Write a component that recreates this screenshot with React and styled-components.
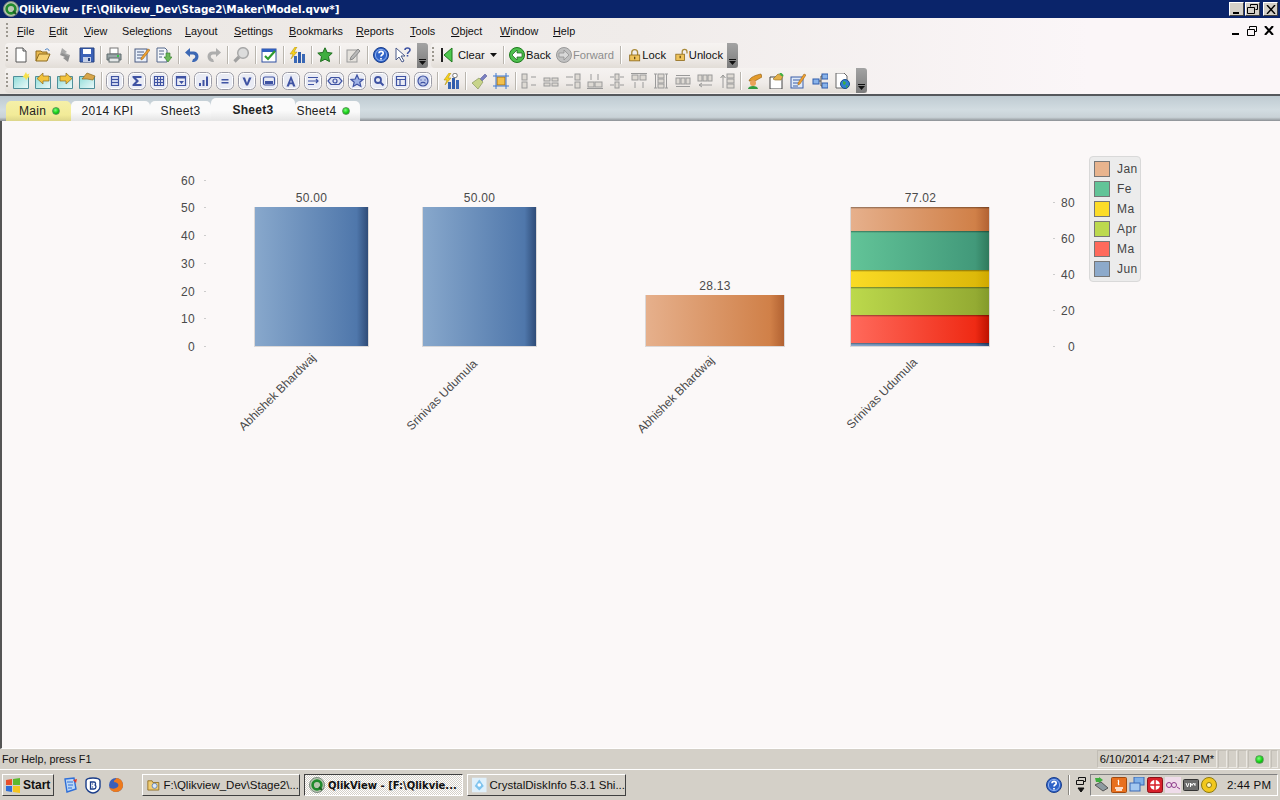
import React from 'react';
import styled, { createGlobalStyle } from 'styled-components';

const GlobalStyle = createGlobalStyle`
  html, body { margin: 0; padding: 0; background: #d4d0c8; }
  * { box-sizing: border-box; }
`;

const uiFont = `"Liberation Sans", Arial, sans-serif`;
const wideFont = `"DejaVu Sans", Verdana, sans-serif`;

const Screen = styled.div`
  width: 1280px;
  height: 800px;
  overflow: hidden;
  display: flex;
  flex-direction: column;
  font-family: ${uiFont};
  font-size: 11px;
  color: #111;
`;

const TitleBar = styled.div`
  height: 18px;
  background: #0a246a;
  display: flex;
  align-items: center;
  padding: 0 2px 0 3px;
  flex: none;
`;

const TitleText = styled.span`
  color: #fff;
  font-family: ${wideFont};
  font-weight: 700;
  font-size: 10.37px;
  flex: 1;
  white-space: nowrap;
`;

const CapButton = styled.div`
  width: 15px;
  height: 14px;
  background: #d4d0c8;
  border: 1px solid;
  border-color: #fff #404040 #404040 #fff;
  margin-left: ${p => p.$gap || 1}px;
  display: flex;
  align-items: center;
  justify-content: center;
`;

const Chrome = styled.div`
  flex: none;
  height: 78px;
  background: linear-gradient(90deg, #ebe7e3 0%, #f0ecea 50%, #fbf6f8 85%, #fbf6f8 100%);
  border-bottom: 2px solid #55585c;
  display: flex;
  flex-direction: column;
`;

const MenuRow = styled.div`
  height: 25px;
  display: flex;
  align-items: center;
  padding: 1px 5px 0 5px;
`;

const Menus = styled.div`
  display: flex;
  flex: 1;
  margin-left: 7px;
`;

const MenuItem = styled.span`
  width: ${p => p.$w}px;
  font-size: 10.8px;
  white-space: nowrap;
  u { text-underline-offset: 1px; }
`;

const MdiButtons = styled.div`
  display: flex;
  gap: 7px;
  padding-right: 1px;
  align-items: center;
`;

const ToolRow = styled.div`
  height: 26px;
  display: flex;
  padding-left: 5px;
  gap: 3px;
`;

const Toolbar = styled.div`
  height: 25px;
  display: flex;
  align-items: center;
  background: linear-gradient(180deg, #f6f3f1 0%, #efebe8 60%, #e2ddd7 100%);
  border-radius: 4px 0 0 4px;
`;

const Grip = styled.div`
  height: 16px;
  background: repeating-linear-gradient(180deg, #9c9890 0 2px, transparent 2px 4px);
  width: 2px;
  margin: 0 2px 0 1px;
`;

const Sep = styled.div`
  width: 1px;
  height: 18px;
  background: #b9b5ae;
  margin: 0 ${p => p.$m ?? 2.5}px;
  box-shadow: 1px 0 0 #fff;
  flex: none;
`;

const IconBtn = styled.div`
  width: 22px;
  height: 22px;
  display: flex;
  align-items: center;
  justify-content: center;
  flex: none;
`;

const TextBtn = styled.div`
  display: flex;
  align-items: center;
  gap: 1px;
  width: ${p => p.$w}px;
  flex: none;
  font-size: 11.2px;
  color: ${p => (p.$off ? '#8d8d8d' : '#111')};
  margin-left: ${p => p.$ml || 0}px;
  white-space: nowrap;
`;

const Chevron = styled.div`
  width: 11px;
  height: 25px;
  background: linear-gradient(180deg, #a3a3a3, #7c7c7c);
  border-radius: 0 3px 3px 0;
  margin-left: ${p => p.$ml || 0}px;
  display: flex;
  align-items: flex-end;
  justify-content: center;
  padding-bottom: 3px;
`;

const TabBand = styled.div`
  flex: none;
  height: 25px;
  background: linear-gradient(180deg, #bfcbd2 0%, #d2dce1 55%, #c9d2d7 85%, #8b9094 100%);
  display: flex;
  align-items: flex-end;
  padding-left: 6px;
`;

const Tab = styled.div`
  width: ${p => p.$w}px;
  height: ${p => (p.$active ? 23 : 20)}px;
  border-radius: 5px 5px 0 0;
  display: flex;
  align-items: center;
  justify-content: center;
  gap: 6px;
  font-size: 12px;
  letter-spacing: 0.3px;
  font-weight: ${p => (p.$active ? 700 : 400)};
  background: ${p => p.$bg || 'linear-gradient(180deg, #fafafa 0%, #fafafa 55%, #e4e4e4 100%)'};
  padding: 0 ${p => p.$pr || 0}px 0 ${p => p.$pl || 0}px;
  color: #222;
`;

const Dot = styled.span`
  width: ${p => p.$s || 8}px;
  height: ${p => p.$s || 8}px;
  border-radius: 50%;
  background: radial-gradient(circle at 40% 35%, #7dff7d 0%, #12d012 55%, #0a8a0a 100%);
  border: 1px solid #5a9a5a;
  flex: none;
`;

const Sheet = styled.div`
  flex: 1;
  min-height: 0;
  background: #fbf8f8;
  border-left: 2px solid #555;
  border-bottom: 1px solid #fff;
  padding: 30px 0 0 168px;
  display: flex;
  align-items: flex-start;
`;

const ChartSvg = styled.svg`
  display: block;
  flex: none;
  margin-left: ${p => p.$ml || 0}px;
  text {
    font-family: ${uiFont};
    font-size: 12px;
    fill: #4a4a4a;
    letter-spacing: 0.3px;
  }
  text.slant {
    letter-spacing: 0;
  }
`;

const Legend = styled.div`
  width: 52px;
  height: 126px;
  margin: 5px 0 0 9px;
  flex: none;
  background: #ececec;
  border: 1px solid #d9d9d9;
  border-radius: 4px;
  padding: 4px 0 0 4px;
  display: flex;
  flex-direction: column;
  gap: 4px;
`;

const LegendRow = styled.div`
  display: flex;
  align-items: center;
  gap: 7px;
  height: 16px;
  font-size: 12px;
  letter-spacing: 0.4px;
  color: #444;
`;

const Swatch = styled.span`
  width: 16px;
  height: 16px;
  flex: none;
  background: ${p => p.$c};
  border: 1px solid #777;
`;

const StatusBar = styled.div`
  flex: none;
  height: 21px;
  background: #d4d0c8;
  display: flex;
  align-items: center;
  border-bottom: 1px solid #fff;
  padding: 0 2px;
`;

const StatusText = styled.span`
  flex: 1;
  font-size: 10.8px;
`;

const StatusCell = styled.div`
  width: ${p => p.$w}px;
  height: 18px;
  border: 1px solid;
  border-color: #c2beb6 #ece9e4 #ece9e4 #c2beb6;
  margin-left: 1px;
  display: flex;
  align-items: center;
  justify-content: center;
  font-size: 11.2px;
  white-space: nowrap;
`;

const Taskbar = styled.div`
  flex: none;
  height: 30px;
  background: #d4d0c8;
  display: flex;
  align-items: center;
  padding: 0 2px;
`;

const StartButton = styled.div`
  width: 52px;
  height: 22px;
  border: 1px solid;
  border-color: #fff #404040 #404040 #fff;
  display: flex;
  align-items: center;
  gap: 2px;
  padding-left: 2px;
  font-weight: 700;
  font-size: 12px;
`;

const QuickLaunch = styled.div`
  display: flex;
  width: 88px;
  padding-left: 5px;
  gap: 1px;
`;

const TaskButton = styled.div`
  width: ${p => p.$w}px;
  height: 22px;
  margin-right: 4px;
  display: flex;
  align-items: center;
  gap: 3px;
  padding-left: 4px;
  white-space: nowrap;
  overflow: hidden;
  border: 1px solid;
  border-color: ${p => (p.$active ? '#404040 #fff #fff #404040' : '#fff #404040 #404040 #fff')};
  font-weight: ${p => (p.$active ? 700 : 400)};
  font-family: ${p => (p.$active ? wideFont : uiFont)};
  font-size: ${p => (p.$active ? '10px' : '11.5px')};
  background: ${p => (p.$active
    ? 'repeating-conic-gradient(#fff 0 25%, #d4d0c8 0 50%) 0 0 / 2px 2px'
    : '#d4d0c8')};
`;

const TaskSpacer = styled.div`
  flex: 1;
`;

const TrayExtras = styled.div`
  display: flex;
  align-items: center;
  gap: 6px;
  margin-right: 3px;
`;

const TrayDivider = styled.div`
  width: 1px;
  height: 20px;
  background: #8a8780;
  box-shadow: 1px 0 0 #fff;
`;

const Tray = styled.div`
  width: 188px;
  height: 22px;
  border: 1px solid;
  border-color: #808080 #fff #fff #808080;
  display: flex;
  align-items: center;
  padding-left: 2px;
  gap: 2px;
`;

const Clock = styled.span`
  margin-left: 8px;
  font-size: 11.5px;
  letter-spacing: 0.2px;
`;

const Svg = ({ s = 16, children }) => (
  <svg width={s} height={s} viewBox="0 0 16 16">{children}</svg>
);

const Q = () => (
  <Svg>
    <circle cx="8" cy="8" r="7.5" fill="#b8c6b0" stroke="#7b8b7f" />
    <circle cx="8" cy="8" r="4.4" fill="none" stroke="#1f8a2c" strokeWidth="2.6" />
    <path d="M10 10l3 3" stroke="#1d5e24" strokeWidth="2" />
  </Svg>
);

const Round = ({ children }) => (
  <svg width="18" height="18" viewBox="0 0 18 18">
    <rect x=".5" y=".5" width="17" height="17" rx="5" fill="#fff" stroke="#9b9ba6" />
    <rect x="2" y="2" width="14" height="14" rx="3.500" fill="#e9ebf4" />
    <g fill="#3f53a3" stroke="#3f53a3" strokeWidth="1.200">{children}</g>
  </svg>
);

const Ghost = ({ children }) => (
  <Svg>
    <g fill="#dedad4" stroke="#9a9a9a" strokeWidth="1">{children}</g>
  </Svg>
);

const Bolt = () => <path d="M6 0L1 7h3L2 12l6-7H5l3-5z" fill="#f7d21b" stroke="#a98a10" strokeWidth=".5" />;

const Chart = () => (
  <Svg>
    <rect x="5" y="9" width="3" height="7" fill="#3a68b5" />
    <rect x="9" y="5" width="3" height="11" fill="#2f5cab" />
    <rect x="13" y="7" width="3" height="9" fill="#3a68b5" />
    <Bolt />
  </Svg>
);

const Sheetish = ({ id, children }) => (
  <svg width="17" height="17" viewBox="0 0 17 17">
    <defs>
      <linearGradient id={id} x1="0" x2="1" y1="0" y2="1">
        <stop offset="0" stopColor="#8fdcd8" />
        <stop offset="1" stopColor="#eefafa" />
      </linearGradient>
    </defs>
    <path d="M.5 4.500h15v12H.5z" fill={`url(#${id})`} stroke="#4f8f9a" />
    {children}
  </svg>
);

const icons = {
  new: <Svg><path d="M3 1h7l3 3v11H3z" fill="#fff" stroke="#555" /><path d="M10 1v3h3" fill="#ddd" stroke="#555" /></Svg>,
  open: <Svg><path d="M1 14V4h5l1 1h5v2" fill="#e9b94f" stroke="#8d6a1e" /><path d="M1 14l3-7h11l-3 7z" fill="#f6d275" stroke="#8d6a1e" /><path d="M10 3c2-2 4-1 4 1" fill="none" stroke="#3a78c2" /></Svg>,
  swap: <Svg><path d="M5 1l5 4-2 1 5 2-2 2-6-3-2 1z" fill="#a8a8a8" /><path d="M11 15L6 11l2-1-5-2 2-2 6 3 2-1z" fill="#8f8f8f" /></Svg>,
  save: <Svg><path d="M1 1h14v14H1z" fill="#3c62b8" stroke="#24407e" /><rect x="4" y="2" width="8" height="5" fill="#fff" /><rect x="4" y="10" width="8" height="5" fill="#c5cfe6" /><rect x="9" y="11" width="2" height="3" fill="#24407e" /></Svg>,
  print: <Svg><rect x="4" y="1" width="8" height="6" fill="#fff" stroke="#777" /><path d="M1 7h14v6H1z" fill="#9aa6a8" stroke="#5f6a6c" /><rect x="3" y="11" width="10" height="4" fill="#e5e8e8" stroke="#5f6a6c" /><rect x="11" y="8" width="2" height="2" fill="#39c24c" /></Svg>,
  edit: <Svg><rect x="1" y="2" width="12" height="13" fill="#e9f0fb" stroke="#4a5a80" /><path d="M3 5h7M3 8h7M3 11h5" stroke="#4a5a80" /><path d="M7 11l7-9 2 1-7 9-2 1z" fill="#f0a030" stroke="#8d5a10" strokeWidth=".5" /></Svg>,
  reload: <Svg><path d="M1 1h8l2 2v12H1z" fill="#f3f6fb" stroke="#55678a" /><path d="M3 4h5M3 7h5M3 10h3" stroke="#55678a" /><path d="M10 6h4v4h2l-4 5-4-5h2z" fill="#6cb85a" stroke="#2f7a25" strokeWidth=".6" /></Svg>,
  undo: <Svg><path d="M6 1L1 5.500 6 10V7.500h3c3 0 3 4 0 4.500l-1 3h2c6-1 6-10 0-10.500H6z" fill="#3d68b4" /></Svg>,
  redo: <Svg><path d="M10 1l5 4.500L10 10V7.500H7c-3 0-3 4 0 4.500l1 3H6C0 14 0 5 6 4.500h4z" fill="#adadad" /></Svg>,
  search: <Svg><circle cx="10" cy="6" r="5.300" fill="#dcdcdc" stroke="#a8a8a8" strokeWidth="1.500" /><path d="M6 10l-4.500 4.500" stroke="#a0a0a0" strokeWidth="3.200" /></Svg>,
  check: <Svg><rect x="1" y="2" width="14" height="13" fill="#fff" stroke="#2f4fa0" /><rect x="1" y="2" width="14" height="3" fill="#2f5fc0" /><path d="M4 9l3 3 7-8" fill="none" stroke="#2f9b2f" strokeWidth="2.2" /></Svg>,
  chart: <Chart />,
  star: <Svg><path d="M8 .8l2.2 4.7 5 .6-3.7 3.5 1 5L8 12.2l-4.5 2.4 1-5L.8 6.1l5-.6z" fill="#3fae3f" stroke="#1d6d1d" /></Svg>,
  pencil: <Svg><rect x="2" y="3" width="10" height="12" fill="#e4e1dc" stroke="#9a9a9a" /><path d="M6 10l7-8 2 2-7 8-3 1z" fill="#b9b9b9" stroke="#8a8a8a" /></Svg>,
  help: <Svg><circle cx="8" cy="8" r="7.5" fill="#2f63c8" stroke="#1b3e8a" /><circle cx="8" cy="8" r="5.6" fill="none" stroke="#8fb0ee" /><path d="M6 6.2c0-2.4 4.2-2.4 4.2 0 0 1.6-2.2 1.6-2.2 3.4M8 11v1.6" fill="none" stroke="#fff" strokeWidth="1.7" /></Svg>,
  whats: <Svg><path d="M1 1v12l3-3 3 5 2-1-3-5h4z" fill="#fff" stroke="#4a5a8a" /><path d="M10 3c0-2.6 5-2.6 5 0 0 2-2.500 2-2.500 4M12.500 8v1.500" fill="none" stroke="#3f53a3" strokeWidth="1.6" /></Svg>,
  newsheet: <Sheetish id="s1"><path d="M13 0l1 2.500 2.500-1-1 2.500 1.500 1-2.500.8-1.500 2.500-1-2.500-2.500-.8 1.500-1.500z" fill="#f7e14a" /></Sheetish>,
  prev: <Sheetish id="s2"><path d="M2 6.500l6-5.500v3h6v5H8v3z" fill="#f3c33d" stroke="#8d6a1e" strokeWidth=".7" /></Sheetish>,
  next: <Sheetish id="s3"><path d="M15 6.500L9 1v3H3v5h6v3z" fill="#f3c33d" stroke="#8d6a1e" strokeWidth=".7" /></Sheetish>,
  hand: <Sheetish id="s4"><path d="M3 7l5-6 8 3-2 4-6-1z" fill="#d9a64a" stroke="#8d6a1e" strokeWidth=".7" /></Sheetish>,
  rList: <Round><path d="M5.500 4.500h7v9h-7zM5.500 7.500h7M5.500 10.500h7" fill="#cfd6ef" /></Round>,
  rSigma: <Round><path d="M4.500 4h9v2H8l3 3-3 3h5.500v2h-9v-1.500L8 9 4.500 5.500z" stroke="none" /></Round>,
  rGrid: <Round><path d="M4.500 4.500h9v9h-9zM4.500 7.500h9M4.500 10.500h9M7.500 4.500v9M10.500 4.500v9" fill="none" /></Round>,
  rMulti: <Round><path d="M4.500 4.500h9v9h-9z" fill="none" /><path d="M4.500 4.500h9v2h-9zM7 9h5l-2.500 3z" stroke="none" /></Round>,
  rBars: <Round><path d="M5 11h2v3H5zM8.500 8h2v6h-2zM12 4.500h2V14h-2z" stroke="none" /></Round>,
  rEq: <Round><path d="M5.500 7h7v1.500h-7zM5.500 10h7v1.500h-7z" stroke="none" /></Round>,
  rCheck: <Round><path d="M4.500 5.500h2.500L9 11l2-5.500h2.500L10 13.500H8z" stroke="none" /></Round>,
  rBtn: <Round><rect x="3.500" y="5" width="11" height="8" rx="1.500" fill="none" /><rect x="5" y="9" width="8" height="3" stroke="none" /></Round>,
  rA: <Round><path d="M9 3.500L13.500 14.500h-2.400l-.8-2.200H7.700l-.8 2.200H4.500zM8.200 10.500h1.600L9 8z" stroke="none" fillRule="evenodd" /></Round>,
  rLines: <Round><path d="M4 5.500h10M4 9h6M4 12.500h6M10 9h4M12 7l2 2-2 2" fill="none" /></Round>,
  rEye: <Round><path d="M2 9l3-3.500h8l3 3.500-3 3.500H5z" fill="#dfe3f3" /><circle cx="9" cy="9" r="2" fill="none" /></Round>,
  rStar: <Round><path d="M9 3l1.800 4 4.200.4-3.200 2.800 1 4.200L9 12.200l-3.800 2.200 1-4.200L3 7.400 7.200 7z" fill="#9fb2e6" /></Round>,
  rSearch: <Round><circle cx="8" cy="8" r="3" fill="none" strokeWidth="1.800" /><path d="M10 10l3.500 3.500" strokeWidth="2" /></Round>,
  rLayout: <Round><path d="M4.500 4.500h9v9h-9zM4.500 7.500h9M8 7.500v6" fill="none" /></Round>,
  rSmile: <Round><circle cx="9" cy="9" r="5" fill="#bcc7ea" /><path d="M6.500 11.500c1-1.500 4-1.500 5 0M7 7.500v1M11 7.500v1" fill="none" /></Round>,
  info: <Svg><rect x="5" y="9" width="3" height="7" fill="#3a68b5" /><rect x="9" y="5" width="3" height="11" fill="#2f5cab" /><rect x="13" y="7" width="3" height="9" fill="#3a68b5" /><Bolt /><circle cx="12" cy="2.500" r="2.300" fill="#fff" stroke="#777" /></Svg>,
  brush: <Svg><path d="M9 6l5-5 2 2-5 5z" fill="#7a7fc0" stroke="#4a4f90" strokeWidth=".5" /><path d="M1 10l7-5 4 4-5 7z" fill="#c8d48a" stroke="#7a8a50" strokeWidth=".6" /></Svg>,
  select: <Svg><rect x="4" y="4" width="8" height="8" fill="#f3c04b" stroke="#a8741a" /><path d="M3 0v16M13 0v16M0 3h16M0 13h16" stroke="#3f78d0" /></Svg>,
  a1: <Ghost><rect x="1" y="1" width="5" height="6" /><rect x="1" y="9" width="5" height="6" /><path d="M10 4h5M10 12h5" /></Ghost>,
  a2: <Ghost><rect x="1" y="5" width="6" height="3" /><rect x="9" y="5" width="6" height="3" /><rect x="1" y="10" width="6" height="3" /><rect x="9" y="10" width="6" height="3" /></Ghost>,
  a3: <Ghost><rect x="10" y="1" width="5" height="6" /><rect x="10" y="9" width="5" height="6" /><path d="M1 4h7M1 12h7" /></Ghost>,
  a4: <Ghost><rect x="1" y="9" width="6" height="5" /><rect x="8" y="9" width="7" height="5" /><path d="M4 1v6M11 1v6M0 15.500h16" /></Ghost>,
  a5: <Ghost><rect x="6" y="1" width="4" height="6" /><rect x="6" y="9" width="4" height="6" /><path d="M1 4h4M11 4h4M1 12h4M11 12h4" /></Ghost>,
  a6: <Ghost><rect x="1" y="2" width="6" height="5" /><rect x="9" y="2" width="6" height="5" /><path d="M0 .5h16M4 9v6M12 9v6" /></Ghost>,
  a7: <Ghost><rect x="5" y="1" width="6" height="4" /><rect x="5" y="6" width="6" height="4" /><rect x="5" y="11" width="6" height="4" /><path d="M1 1h3M1 15h3M2.500 1v14M12 1h3M12 15h3M13.500 1v14" /></Ghost>,
  a8: <Ghost><rect x="1" y="5" width="4" height="6" /><rect x="6" y="5" width="4" height="6" /><rect x="11" y="5" width="4" height="6" /><path d="M1 2.500h14M1 13.500h14" /></Ghost>,
  a9: <Ghost><rect x="1" y="2" width="4" height="6" /><rect x="6" y="2" width="4" height="6" /><rect x="11" y="2" width="4" height="6" /><path d="M15 12H2M5 10l-3 2 3 2" /></Ghost>,
  a10: <Ghost><rect x="8" y="1" width="7" height="4" /><rect x="8" y="6" width="7" height="4" /><rect x="8" y="11" width="7" height="4" /><path d="M4 15V2M1.500 5L4 2l2.500 3" /></Ghost>,
  pub: <Svg><path d="M3 8c1-4 7-6 12-7l1 3-7 4z" fill="#e39a2a" stroke="#8d5a10" strokeWidth=".6" /><circle cx="7" cy="10" r="3" fill="#e8a25a" /><path d="M2 16c0-4 10-4 10 0z" fill="#2f9b3f" /></Svg>,
  doc: <Svg><path d="M2 4h12v12H2z" fill="#fff" stroke="#444" /><path d="M5 6l5-5 5 2-2 4H7z" fill="#e3b04a" stroke="#8d6a1e" strokeWidth=".6" /><path d="M12 0l3 3" stroke="#3fae3f" strokeWidth="2" /></Svg>,
  note: <Svg><rect x="1" y="4" width="12" height="11" fill="#dfe9f7" stroke="#3a5ea8" /><path d="M3 7h7M3 10h7M3 13h5" stroke="#3a5ea8" /><path d="M8 10l6-9 2 1-6 9-2 1z" fill="#f0a030" stroke="#8d5a10" strokeWidth=".5" /></Svg>,
  tree: <Svg><rect x="1" y="6" width="6" height="5" fill="#8ab4ea" stroke="#2f5cab" /><rect x="10" y="1" width="6" height="5" fill="#8ab4ea" stroke="#2f5cab" /><rect x="10" y="10" width="6" height="5" fill="#8ab4ea" stroke="#2f5cab" /><path d="M7 8h2M9 3v10M9 3h1M9 13h1" stroke="#555" /></Svg>,
  globe: <Svg><path d="M2 0h8l3 3v12H2z" fill="#fff" stroke="#666" /><circle cx="11" cy="11" r="4.500" fill="#2f7fd0" stroke="#1b4f8a" /><path d="M9 8l3 1-1 3-2-1zM12 12l2 1-2 2z" fill="#3fae3f" /></Svg>,
  clear: <Svg><path d="M3 1v14" stroke="#222" strokeWidth="2" /><path d="M13 1L5 8l8 7z" fill="#4fc84f" stroke="#1d7a1d" /></Svg>,
  back: <Svg><circle cx="8" cy="8" r="7.500" fill="#4ebf4e" stroke="#1d7a1d" /><path d="M3 8l5-5v3h5v4H8v3z" fill="#fff" stroke="#1d5a1d" strokeWidth=".7" /></Svg>,
  fwd: <Svg><circle cx="8" cy="8" r="7.500" fill="#c0c0c0" stroke="#9a9a9a" /><path d="M13 8L8 3v3H3v4h5v3z" fill="#d8d8d8" stroke="#8a8a8a" strokeWidth=".7" /></Svg>,
  lock: <Svg><path d="M4.500 8V5a3.500 3.500 0 017 0v3" fill="none" stroke="#a98a3a" strokeWidth="1.600" /><rect x="2" y="8" width="12" height="7" fill="#eec25a" stroke="#8d6a1e" /><path d="M8 10v3" stroke="#5a4310" strokeWidth="1.500" /></Svg>,
  unlock: <Svg><path d="M9 7V4a3 3 0 016 0v2" fill="none" stroke="#a98a3a" strokeWidth="1.600" /><rect x="1" y="7" width="11" height="8" fill="#eec25a" stroke="#8d6a1e" /><path d="M6.500 9v3" stroke="#5a4310" strokeWidth="1.500" /></Svg>,
};

const ChevronMark = () => (
  <svg width="7" height="6" viewBox="0 0 7 6">
    <path d="M0 0h7v1H0zM0 2h7L3.500 6z" fill="#111" />
  </svg>
);

const row1 = ['new', 'open', 'swap', 'save', '!', 'print', '|', 'edit', 'reload', '|', 'undo', 'redo', '!', 'search', '|', 'check', '|', 'chart', '|', 'star', '|', 'pencil', '|', 'help', 'whats'];
const row2 = ['newsheet', 'prev', 'next', 'hand', '|', 'rList', 'rSigma', 'rGrid', 'rMulti', 'rBars', 'rEq', 'rCheck', 'rBtn', 'rA', 'rLines', 'rEye', 'rStar', 'rSearch', 'rLayout', 'rSmile', '|', 'info', '|', 'brush', 'select', '|', 'a1', 'a2', 'a3', 'a4', 'a5', 'a6', 'a7', 'a8', 'a9', 'a10', '!', 'pub', 'doc', 'note', 'tree', 'globe'];

const IconRun = ({ names }) => names.map((n, i) => {
  if (n === '|') return <Sep key={i} />;
  if (n === '!') return <Sep key={i} $m={2} />;
  return <IconBtn key={i}>{icons[n]}</IconBtn>;
});

const menus = [
  ['', 'F', 'ile', 32], ['', 'E', 'dit', 35], ['', 'V', 'iew', 38], ['Sele', 'c', 'tions', 63], ['', 'L', 'ayout', 49],
  ['', 'S', 'ettings', 55], ['', 'B', 'ookmarks', 67], ['', 'R', 'eports', 54], ['', 'T', 'ools', 41], ['', 'O', 'bject', 49],
  ['', 'W', 'indow', 53], ['', 'H', 'elp', 40],
];

const tabs = [
  { label: 'Main', w: 65, dot: true, pl: 2, bg: 'linear-gradient(180deg, #f5f0a8 0%, #f2eb98 70%, #dcd68a 100%)' },
  { label: '2014 KPI', w: 79, pr: 6 },
  { label: 'Sheet3', w: 61 },
  { label: 'Sheet3', w: 84, active: true },
  { label: 'Sheet4', w: 65, dot: true, pr: 8 },
];

const palette = [
  { id: 'jan', name: 'Jan', swatch: '#e8b48e', stops: ['#e6b08c', '#d08048', '#b26232'] },
  { id: 'feb', name: 'Fe', swatch: '#62c498', stops: ['#62c498', '#42997a', '#2f7a5c'] },
  { id: 'mar', name: 'Ma', swatch: '#fcdc28', stops: ['#fadb25', '#ddb90a', '#cfa800'] },
  { id: 'apr', name: 'Apr', swatch: '#bcd94e', stops: ['#bcd94c', '#94ab33', '#839a2a'] },
  { id: 'may', name: 'Ma', swatch: '#ff6a5c', stops: ['#ff6a5c', '#ef2a14', '#bd1200'] },
  { id: 'jun', name: 'Jun', swatch: '#8daacb', stops: ['#88a8cc', '#4f77ab', '#2f4c78'] },
];

const Gradients = ({ prefix }) => (
  <defs>
    {palette.map(p => (
      <linearGradient key={p.id} id={prefix + p.id} x1="0" x2="1" y1="0" y2="0">
        <stop offset="0" stopColor={p.stops[0]} />
        <stop offset=".9" stopColor={p.stops[1]} />
        <stop offset="1" stopColor={p.stops[2]} />
      </linearGradient>
    ))}
    <linearGradient id={prefix + 'shade'} x1="0" x2="0" y1="0" y2="1">
      <stop offset="0" stopColor="#000" stopOpacity=".4" />
      <stop offset="1" stopColor="#000" stopOpacity="0" />
    </linearGradient>
  </defs>
);

const Bar = ({ x, y, w, h, fill }) => (
  <g>
    <rect x={x - 1} y={y} width={w + 2} height={h + 1} fill="#dbd8d8" />
    <rect x={x} y={y} width={w} height={h} fill={`url(#${fill})`} />
  </g>
);

const Segment = ({ x, y, w, h, fill, shade }) => (
  <g>
    <rect x={x} y={y} width={w} height={h} fill={`url(#${fill})`} />
    <rect x={x} y={y} width={w} height="2" fill={`url(#${shade})`} />
  </g>
);

const AxisLabel = ({ x, y, children, anchor = 'end' }) => (
  <text x={x} y={y} textAnchor={anchor}>{children}</text>
);

const Tick = ({ x, y }) => <rect x={x} y={y} width="2" height="1" fill="#ccc" />;

const SlantLabel = ({ x, y, children }) => (
  <text className="slant" x={x} y={y} textAnchor="end" transform={`rotate(-45 ${x} ${y})`}>{children}</text>
);

const leftTicks = [[60, 181], [50, 208], [40, 236], [30, 264], [20, 292], [10, 319], [0, 347]];
const rightTicks = [[80, 203], [60, 239], [40, 275], [20, 311], [0, 347]];
const stack = [
  ['jan', 207, 24], ['feb', 231, 39], ['mar', 270, 17], ['apr', 287, 28], ['may', 315, 28], ['jun', 343, 3],
];

const LeftChart = () => (
  <ChartSvg width="380" height="300" viewBox="170 151 380 300">
    <Gradients prefix="l-" />
    {leftTicks.map(([v, y]) => (
      <g key={v}>
        <AxisLabel x="195" y={y + 4}>{v}</AxisLabel>
        <Tick x="204" y={y - 1} />
      </g>
    ))}
    <Bar x={255} y={207} w={113} h={139} fill="l-jun" />
    <Bar x={423} y={207} w={113} h={139} fill="l-jun" />
    <AxisLabel x="311.500" y="202" anchor="middle">50.00</AxisLabel>
    <AxisLabel x="479.500" y="202" anchor="middle">50.00</AxisLabel>
    <SlantLabel x="316.500" y="358.500">Abhishek Bhardwaj</SlantLabel>
    <SlantLabel x="478" y="364.500">Srinivas Udumula</SlantLabel>
  </ChartSvg>
);

const RightChart = () => (
  <ChartSvg width="450" height="300" viewBox="630 151 450 300" $ml={80}>
    <Gradients prefix="r-" />
    <Bar x={646} y={295} w={138} h={51} fill="r-jan" />
    <AxisLabel x="715" y="290" anchor="middle">28.13</AxisLabel>
    <rect x="850" y="207" width="140" height="140" fill="#dbd8d8" />
    {stack.map(([id, y, h]) => (
      <Segment key={id} x={851} y={y} w={138} h={h} fill={`r-${id}`} shade="r-shade" />
    ))}
    <AxisLabel x="920.500" y="202" anchor="middle">77.02</AxisLabel>
    {rightTicks.map(([v, y]) => (
      <g key={v}>
        <Tick x="1053" y={y - 1} />
        <AxisLabel x="1075" y={y + 4}>{v}</AxisLabel>
      </g>
    ))}
    <SlantLabel x="715" y="361">Abhishek Bhardwaj</SlantLabel>
    <SlantLabel x="918" y="363">Srinivas Udumula</SlantLabel>
  </ChartSvg>
);

const trayIcons = [
  <Svg key="a"><path d="M2 8l6-3 7 6-5 3z" fill="#8d9aa0" stroke="#555" /><path d="M2 1h4V0l4 3-4 3V5H3z" fill="#3fae3f" /></Svg>,
  <Svg key="b"><rect x=".5" y=".5" width="15" height="15" rx="1" fill="#e8701e" stroke="#a04a10" /><path d="M4 11h8M5 13h6M7 3c2 2-1 3 1 5" fill="none" stroke="#fff" strokeWidth="1.300" /></Svg>,
  <Svg key="c"><rect x="5" y="0" width="10" height="8" fill="#7fb0e8" stroke="#3a68b5" /><rect x="1" y="6" width="10" height="8" fill="#a4c8f0" stroke="#3a68b5" /></Svg>,
  <Svg key="d"><rect x=".5" y=".5" width="15" height="15" rx="2" fill="#d8202a" stroke="#8a1018" /><circle cx="8" cy="8" r="5" fill="#fff" /><path d="M3 8h10M8 3v10" stroke="#d8202a" strokeWidth="1.500" /></Svg>,
  <Svg key="e"><rect width="16" height="16" fill="#efdcea" /><circle cx="4" cy="8" r="2.500" fill="none" stroke="#8d3a8a" /><circle cx="9" cy="8" r="2.500" fill="none" stroke="#8d3a8a" /><path d="M12 10l3 2" stroke="#8d3a8a" /></Svg>,
  <Svg key="f"><rect x=".5" y="2.500" width="15" height="11" rx="1" fill="#6c6c6c" stroke="#333" /><path d="M3 6l1.500 4L6 6M7.500 10V6l1.500 2.500L10.500 6l1.500 2.500V6" fill="none" stroke="#fff" /></Svg>,
  <Svg key="g"><circle cx="8" cy="8" r="7.500" fill="#f2c81e" stroke="#8d7a10" /><circle cx="8" cy="8" r="2.500" fill="#fff6c0" stroke="#8d7a10" /></Svg>,
];

export default function App() {
  return (
    <Screen>
      <GlobalStyle />
      <TitleBar>
        <Q />
        <TitleText>QlikView - [F:\Qlikview_Dev\Stage2\Maker\Model.qvw*]</TitleText>
        <CapButton>
          <svg width="9" height="9"><rect x="1" y="7" width="6" height="2" fill="#000" /></svg>
        </CapButton>
        <CapButton>
          <svg width="11" height="10"><path d="M3.500 2.500V.5h7v5h-2M.5 3.500h7v6h-7z" fill="none" stroke="#000" /></svg>
        </CapButton>
        <CapButton $gap={3}>
          <svg width="10" height="9"><path d="M1 0l8 9M9 0L1 9" stroke="#000" strokeWidth="1.400" /></svg>
        </CapButton>
      </TitleBar>

      <Chrome>
        <MenuRow>
          <Grip />
          <Menus>
            {menus.map(([pre, key, rest, w]) => (
              <MenuItem key={key} $w={w}>{pre}<u>{key}</u>{rest}</MenuItem>
            ))}
          </Menus>
          <MdiButtons>
            <svg width="9" height="9"><rect x="1" y="7" width="7" height="2" fill="#000" /></svg>
            <svg width="10" height="10"><path d="M2.500 2.500V.5h7v5h-2M.5 3.500h7v6h-7z" fill="none" stroke="#000" /></svg>
            <svg width="10" height="9"><path d="M1 0l8 9M9 0L1 9" stroke="#000" strokeWidth="2" /></svg>
          </MdiButtons>
        </MenuRow>
        <ToolRow>
          <Toolbar>
            <Grip />
            <IconRun names={row1} />
            <Chevron $ml={3}><ChevronMark /></Chevron>
          </Toolbar>
          <Toolbar>
            <Grip />
            <IconBtn>{icons.clear}</IconBtn>
            <TextBtn $w={26}>Clear</TextBtn>
            <svg width="17" height="8" viewBox="0 0 17 8"><path d="M6 2h7L9.500 6z" fill="#111" /></svg>
            <Sep $m={2} />
            <TextBtn $ml={3} $w={47}>{icons.back}Back</TextBtn>
            <TextBtn $off $w={58}>{icons.fwd}Forward</TextBtn>
            <Sep $m={6} />
            <TextBtn $ml={1} $w={38}>{icons.lock}Lock</TextBtn>
            <TextBtn $ml={9} $w={48}>{icons.unlock}Unlock</TextBtn>
            <Chevron $ml={4}><ChevronMark /></Chevron>
          </Toolbar>
        </ToolRow>
        <ToolRow>
          <Toolbar>
            <Grip />
            <IconRun names={row2} />
            <Chevron $ml={3}><ChevronMark /></Chevron>
          </Toolbar>
        </ToolRow>
      </Chrome>

      <TabBand>
        {tabs.map((t, i) => (
          <Tab key={i} $w={t.w} $active={t.active} $bg={t.bg} $pl={t.pl} $pr={t.pr}>
            {t.label}
            {t.dot && <Dot />}
          </Tab>
        ))}
      </TabBand>

      <Sheet>
        <LeftChart />
        <RightChart />
        <Legend>
          {palette.map(p => (
            <LegendRow key={p.id}>
              <Swatch $c={p.swatch} />
              {p.name}
            </LegendRow>
          ))}
        </Legend>
      </Sheet>

      <StatusBar>
        <StatusText>For Help, press F1</StatusText>
        <StatusCell $w={120}>6/10/2014 4:21:47 PM*</StatusCell>
        <StatusCell $w={9} />
        <StatusCell $w={9} />
        <StatusCell $w={9} />
        <StatusCell $w={22}><Dot $s={9} /></StatusCell>
        <StatusCell $w={7} />
      </StatusBar>

      <Taskbar>
        <StartButton>
          <svg width="16" height="15" viewBox="0 0 16 15">
            <path d="M1 2l6-1v6H1z" fill="#e8502a" />
            <path d="M8 1l7-1v7H8z" fill="#5cb82e" />
            <path d="M1 8h6v6l-6-1z" fill="#2f6fd8" />
            <path d="M8 8h7v7l-7-1z" fill="#f4c420" />
          </svg>
          Start
        </StartButton>
        <QuickLaunch>
          <IconBtn>
            <Svg><path d="M3 2l9-1 2 11-9 3z" fill="#bcd8f5" stroke="#2f6fd8" strokeWidth="1.400" /><path d="M5 5h6M6 8h5M6 11h4" stroke="#2f6fd8" /><path d="M11 3l4-1-1 4z" fill="#e23a2a" /></Svg>
          </IconBtn>
          <IconBtn>
            <svg width="16" height="17" viewBox="0 0 16 17">
              <path d="M8 1c4 0 7 1 7 3v6c0 3-4 6-7 6s-7-3-7-6V4c0-2 3-3 7-3z" fill="#fff" stroke="#1b3e8a" strokeWidth="1.400" />
              <path d="M5.500 5h3.500c2 0 2 3 .5 3 2 0 2 4-.5 4H5.500zM7.500 6.500v1M7.500 9.500v1" fill="none" stroke="#1b3e8a" strokeWidth="1.300" />
            </svg>
          </IconBtn>
          <IconBtn>
            <Svg><circle cx="8" cy="8" r="7" fill="#3a5fb8" /><path d="M8 1c5 0 7 4 7 7 0 4-3 7-7 7-3 0-6-2-7-5 2 2 5 2 7 1 3-1 3-4 1-5-1-1-3 0-3-2 1-2 3-2 2-3z" fill="#ee7a1c" /></Svg>
          </IconBtn>
        </QuickLaunch>
        <TaskButton $w={158}>
          <Svg><path d="M1 14V3h5l1 2h7v9z" fill="#f0cd72" stroke="#8d6a1e" /><circle cx="9" cy="9" r="3" fill="#dbe8f8" stroke="#5a7ab0" /></Svg>
          {'F:\\Qlikview_Dev\\Stage2\\...'}
        </TaskButton>
        <TaskButton $w={159} $active>
          <Q />
          {'QlikView - [F:\\Qlikvie...'}
        </TaskButton>
        <TaskButton $w={159}>
          <Svg><rect width="16" height="16" fill="#dff0fb" /><path d="M3 9l5-7 5 7-5 5z" fill="#7fc4ee" /><circle cx="8" cy="8" r="2" fill="#fff" /></Svg>
          CrystalDiskInfo 5.3.1 Shi...
        </TaskButton>
        <TaskSpacer />
        <TrayExtras>
          {icons.help}
          <TrayDivider />
          <svg width="12" height="18" viewBox="0 0 12 18">
            <path d="M3.500 3.500V1.500h7v4h-2M1.500 4.500h7v4h-7zM3 12h6l-3 4z" fill="none" stroke="#111" />
            <path d="M3 12h6l-3 4z" fill="#111" />
          </svg>
        </TrayExtras>
        <Tray>
          {trayIcons}
          <Clock>2:44 PM</Clock>
        </Tray>
      </Taskbar>
    </Screen>
  );
}
